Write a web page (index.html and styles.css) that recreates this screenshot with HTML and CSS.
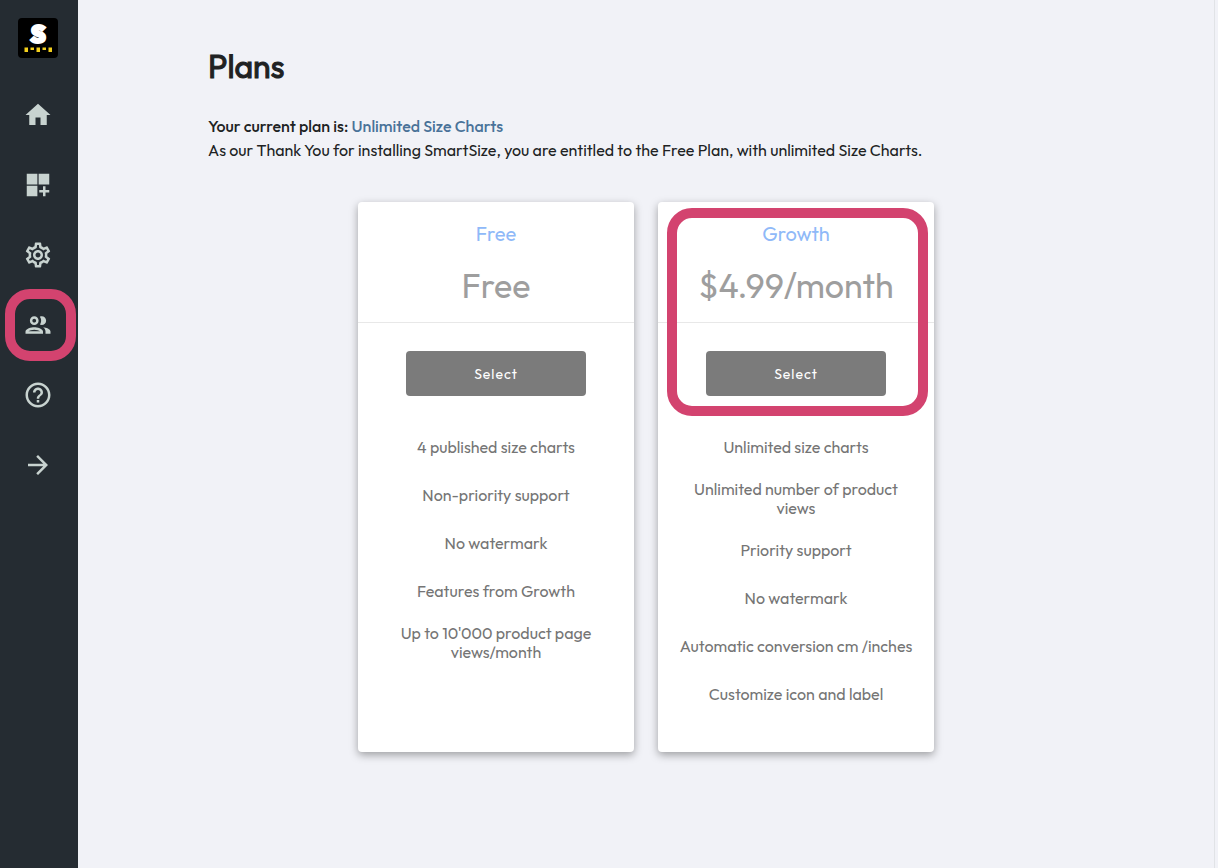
FILE: index.html
```html
<!DOCTYPE html>
<html lang="en">
<head>
  <meta charset="UTF-8">
  <meta name="viewport" content="width=device-width, initial-scale=1.0">
  <title>Plans</title>
  <link rel="stylesheet" href="styles.css">
</head>
<body>
  <aside class="sidebar">
    <a class="logo" href="#" aria-label="SmartSize">
      <svg viewBox="0 0 40 40">
        <text x="20" y="25" text-anchor="middle">S</text>
        <path fill="#f3cf1c" d="M6.5 29.5H10V34H6.5zM12.5 29.5H16V32h-3.5zM18.5 29.5H22V34h-3.5zM24.5 29.5H28V32h-3.5zM30.5 29.5H34V34h-3.5z"/>
      </svg>
    </a>
    <nav>
      <a href="#home" aria-label="Home">
        <svg viewBox="0 0 24 24"><path d="M10 20v-6h4v6h5v-8h3L12 3 2 12h3v8z"/></svg>
      </a>
      <a href="#charts" aria-label="Size charts">
        <svg viewBox="0 0 24 24"><path d="M3 3h8.500v8.500H3zM12.500 3H21v8.500h-8.500zM3 12.500h8.500V21H3zM18 13h-2v3h-3v2h3v3h2v-3h3v-2h-3z"/></svg>
      </a>
      <a href="#settings" aria-label="Settings">
        <svg viewBox="0 0 24 24"><path d="M19.430 12.980c.04-.32.07-.64.07-.98 0-.34-.03-.66-.07-.98l2.110-1.650c.19-.15.24-.42.12-.64l-2-3.460c-.09-.16-.26-.25-.44-.25-.06 0-.12.01-.17.03l-2.490 1c-.52-.4-1.080-.73-1.690-.98l-.38-2.650C14.460 2.180 14.250 2 14 2h-4c-.25 0-.46.18-.49.42l-.38 2.650c-.61.25-1.170.59-1.690.98l-2.490-1c-.06-.02-.12-.03-.18-.03-.17 0-.34.09-.43.25l-2 3.460c-.13.22-.07.49.12.64l2.110 1.650c-.04.32-.07.65-.07.98 0 .33.03.66.07.98l-2.110 1.650c-.19.15-.24.42-.12.64l2 3.460c.09.16.26.25.44.25.06 0 .12-.01.17-.03l2.490-1c.52.4 1.080.73 1.690.98l.38 2.650c.03.24.24.42.49.42h4c.25 0 .46-.18.49-.42l.38-2.650c.61-.25 1.170-.59 1.690-.98l2.490 1c.06.02.12.03.18.03.17 0 .34-.09.43-.25l2-3.460c.12-.22.07-.49-.12-.64l-2.110-1.650zm-1.980-1.710c.04.31.05.52.05.73 0 .21-.02.43-.05.73l-.14 1.130.89.7 1.080.84-.7 1.210-1.270-.51-1.040-.42-.9.68c-.43.32-.84.56-1.250.73l-1.060.43-.16 1.130-.2 1.350h-1.400l-.19-1.350-.16-1.130-1.060-.43c-.43-.18-.83-.41-1.230-.71l-.91-.7-1.060.43-1.270.51-.7-1.210 1.080-.84.89-.7-.14-1.130c-.03-.31-.05-.54-.05-.74s.02-.43.05-.73l.14-1.130-.89-.7-1.080-.84.7-1.210 1.270.51 1.040.42.9-.68c.43-.32.84-.56 1.250-.73l1.060-.43.16-1.130.2-1.350h1.390l.19 1.350.16 1.130 1.060.43c.43.18.83.41 1.230.71l.91.7 1.060-.43 1.270-.51.7 1.210-1.070.85-.89.7.14 1.130zM12 8c-2.210 0-4 1.790-4 4s1.790 4 4 4 4-1.790 4-4-1.790-4-4-4zm0 6c-1.100 0-2-.9-2-2s.9-2 2-2 2 .9 2 2-.9 2-2 2z"/></svg>
      </a>
      <a class="marked" href="#plans" aria-label="Plans">
        <svg viewBox="0 0 24 24"><path d="M9 13.750c-2.340 0-7 1.170-7 3.500V19h14v-1.750c0-2.330-4.660-3.500-7-3.500zM4.340 17c.84-.58 2.870-1.250 4.660-1.250s3.820.67 4.660 1.250H4.340zM9 12c1.930 0 3.500-1.570 3.500-3.500S10.930 5 9 5 5.500 6.570 5.500 8.500 7.070 12 9 12zm0-5c.83 0 1.500.67 1.500 1.500S9.830 10 9 10s-1.500-.67-1.500-1.500S8.170 7 9 7zm7.040 6.810c1.160.84 1.960 1.960 1.960 3.440V19h4v-1.750c0-2.020-3.500-3.170-5.960-3.440zM15 12c1.930 0 3.500-1.570 3.500-3.500S16.930 5 15 5c-.54 0-1.040.13-1.500.35.63.89 1 1.980 1 3.150s-.37 2.260-1 3.150c.46.22.96.35 1.500.35z"/></svg>
      </a>
      <a href="#help" aria-label="Help">
        <svg viewBox="0 0 24 24"><path d="M11 18h2v-2h-2v2zm1-16C6.480 2 2 6.480 2 12s4.480 10 10 10 10-4.480 10-10S17.520 2 12 2zm0 18c-4.410 0-8-3.590-8-8s3.590-8 8-8 8 3.590 8 8-3.590 8-8 8zm0-14c-2.210 0-4 1.790-4 4h2c0-1.100.9-2 2-2s2 .9 2 2c0 2-3 1.750-3 5h2c0-2.250 3-2.500 3-5 0-2.210-1.790-4-4-4z"/></svg>
      </a>
      <a href="#expand" aria-label="Expand menu">
        <svg viewBox="0 0 24 24"><path d="M12 4l-1.410 1.410L16.170 11H4v2h12.170l-5.580 5.590L12 20l8-8z"/></svg>
      </a>
    </nav>
  </aside>

  <main>
    <h1>Plans</h1>
    <p class="current">Your current plan is: <a href="#current">Unlimited Size Charts</a></p>
    <p>As our Thank You for installing SmartSize, you are entitled to the Free Plan, with unlimited Size Charts.</p>

    <div class="plans">
      <section class="plan">
        <header>
          <h2>Free</h2>
          <div class="price">Free</div>
        </header>
        <button type="button">Select</button>
        <ul>
          <li>4 published size charts</li>
          <li>Non-priority support</li>
          <li>No watermark</li>
          <li>Features from Growth</li>
          <li>Up to 10'000 product page views/month</li>
        </ul>
      </section>

      <section class="plan featured">
        <header>
          <h2>Growth</h2>
          <div class="price">$4.99/month</div>
        </header>
        <button type="button">Select</button>
        <ul>
          <li>Unlimited size charts</li>
          <li>Unlimited number of product views</li>
          <li>Priority support</li>
          <li>No watermark</li>
          <li>Automatic conversion cm /inches</li>
          <li>Customize icon and label</li>
        </ul>
      </section>
    </div>
  </main>
</body>
</html>
```
FILE: styles.css
```css
*,
*::after {
  box-sizing: border-box;
}

body {
  margin: 0;
  min-height: 100vh;
  display: flex;
  background-color: #f1f2f7;
  color: #202223;
  font-family: Outfit, Lato, sans-serif;
  font-size: 16px;
  line-height: 24px;
}

h1, h2, p, ul {
  margin: 0;
  padding: 0;
}

.sidebar {
  flex: 0 0 78px;
  padding: 18px 2px 18px 0;
  display: flex;
  flex-direction: column;
  align-items: center;
  gap: 22px;
  background-color: #252c32;
}

.logo {
  width: 40px;
  height: 40px;
  border-radius: 4px;
  background-color: #000;
}

.logo svg {
  display: block;
}

.logo text {
  font-family: Outfit, Lato, sans-serif;
  font-size: 25px;
  font-weight: 900;
  fill: #fff;
  stroke: #fff;
  stroke-width: 2px;
}

nav {
  width: 100%;
}

nav a {
  position: relative;
  height: 70px;
  display: flex;
  align-items: center;
  justify-content: center;
}

nav svg {
  width: 30px;
  height: 30px;
  fill: #c8d3d0;
}

/* pink highlight frames */
.marked::after,
.featured::after {
  content: "";
  position: absolute;
  border: 10px solid #d3436f;
  border-radius: 25px;
  pointer-events: none;
}

.marked::after {
  inset: -1px 0 -1px 5px;
}

.featured::after {
  top: 6px;
  left: 9px;
  right: 6px;
  height: 208px;
}

main {
  flex: 1;
  padding: 46px 130px;
  border-right: 1px solid #e1e3e6;
  margin-right: 3px;
}

h1 {
  margin-bottom: 28px;
  font-size: 32px;
  font-weight: 400;
  line-height: 40px;
  -webkit-text-stroke: 1px;
}

.current {
  font-weight: 500;
}

.current a {
  color: #4a7299;
  text-decoration: none;
}

.plans {
  margin-top: 40px;
  display: flex;
  justify-content: center;
  gap: 24px;
}

.plan {
  position: relative;
  width: 276px;
  padding-bottom: 34px;
  border-radius: 4px;
  background-color: #fff;
  color: #757575;
  text-align: center;
  box-shadow: 0 3px 8px rgba(0, 0, 0, 0.35);
}

.plan header {
  padding: 16px 0;
  border-bottom: 1px solid #e8e8e8;
}

.plan h2 {
  font-size: 20px;
  font-weight: 400;
  line-height: 32px;
  color: #8fb9f8;
}

.price {
  margin-top: 16px;
  font-size: 34px;
  line-height: 40px;
  color: #9e9e9e;
}

.plan button {
  width: 180px;
  height: 45px;
  margin: 28px 0 27px;
  border: none;
  border-radius: 4px;
  background-color: #7b7b7b;
  color: #fff;
  font-family: inherit;
  font-size: 14px;
  letter-spacing: 1px;
  cursor: pointer;
}

.plan button:hover {
  background-color: #6b6b6b;
}

.plan ul {
  list-style: none;
}

.plan li {
  min-height: 48px;
  padding: 9px 20px 8px;
  display: flex;
  align-items: center;
  justify-content: center;
  line-height: 19px;
}
```
